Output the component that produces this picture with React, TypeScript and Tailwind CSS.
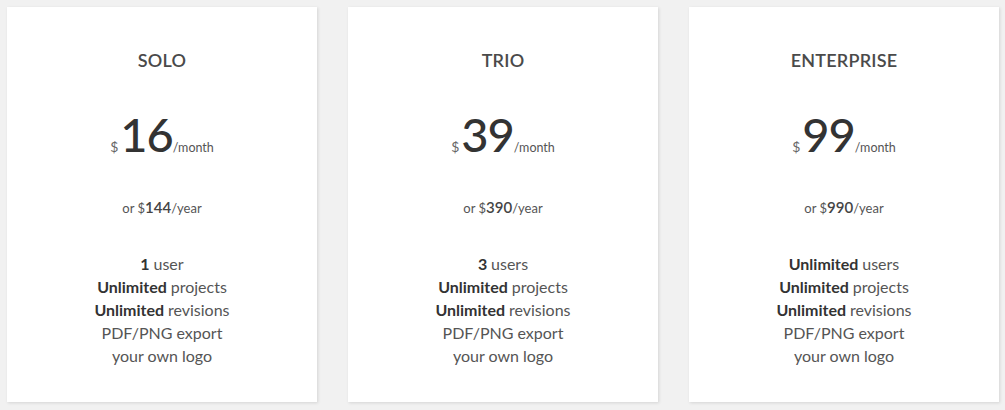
const plans = [
  {
    name: "SOLO",
    price: "16",
    yearly: "144",
    features: [
      { strong: "1", rest: "user" },
      { strong: "Unlimited", rest: "projects" },
      { strong: "Unlimited", rest: "revisions" },
      { strong: "", rest: "PDF/PNG export" },
      { strong: "", rest: "your own logo" },
    ],
  },
  {
    name: "TRIO",
    price: "39",
    yearly: "390",
    features: [
      { strong: "3", rest: "users" },
      { strong: "Unlimited", rest: "projects" },
      { strong: "Unlimited", rest: "revisions" },
      { strong: "", rest: "PDF/PNG export" },
      { strong: "", rest: "your own logo" },
    ],
  },
  {
    name: "ENTERPRISE",
    price: "99",
    yearly: "990",
    features: [
      { strong: "Unlimited", rest: "users" },
      { strong: "Unlimited", rest: "projects" },
      { strong: "Unlimited", rest: "revisions" },
      { strong: "", rest: "PDF/PNG export" },
      { strong: "", rest: "your own logo" },
    ],
  },
];

type Plan = (typeof plans)[number];

function PlanCard({ plan }: { plan: Plan }) {
  return (
    <div className="flex h-[395px] w-[310px] flex-col items-center bg-white pt-[41px] shadow-[1px_1px_3px_rgba(0,0,0,0.12)]">
      <h2 className="text-[18px] font-semibold leading-[24px] tracking-[0.2px] text-[#4a4a4a]">{plan.name}</h2>

      <div className="mt-[38px] flex items-baseline">
        <span className="mr-[2px] text-[14px] text-[#666]">$</span>
        <span className="text-[47px] font-medium leading-[48px] tracking-[-1px] text-[#333]">{plan.price}</span>
        <span className="text-[12.5px] text-[#555]">/month</span>
      </div>

      <p className="mt-[40px] text-[13px] leading-[18px] text-[#555]">
        or $<span className="text-[15px] font-semibold text-[#444]">{plan.yearly}</span>/year
      </p>

      <ul className="mt-[35px] text-center text-[16px] leading-[23px] text-[#555]">
        {plan.features.map((f, i) => (
          <li key={i}>
            {f.strong && <span className="font-bold text-[#333]">{f.strong} </span>}
            {f.rest}
          </li>
        ))}
      </ul>
    </div>
  );
}

export default function App() {
  return (
    <div className="h-[410px] w-[1005px] bg-[#f1f1f1] font-['Lato','Open_Sans',sans-serif]">
      <div className="flex gap-[31px] pl-[7px] pt-[7px]">
        {plans.map((p) => (
          <PlanCard key={p.name} plan={p} />
        ))}
      </div>
    </div>
  );
}
